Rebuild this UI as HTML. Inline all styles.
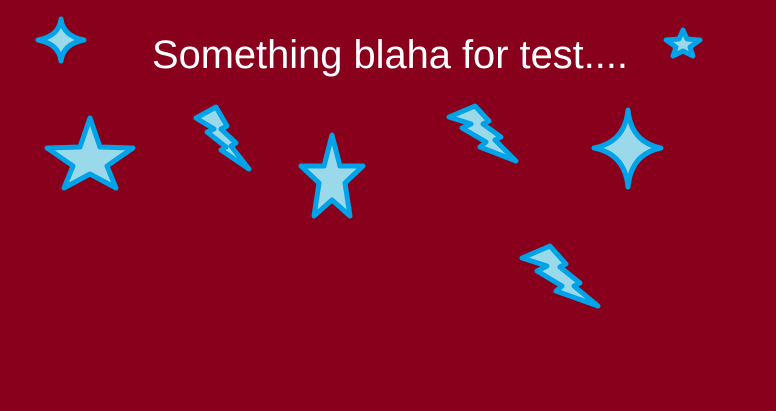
<!DOCTYPE html>
<html><head><meta charset="utf-8"><style>
html,body{margin:0;padding:0;background:#88001b;}
svg{display:block}
</style></head><body>
<svg width="776" height="411" viewBox="0 0 776 411" xmlns="http://www.w3.org/2000/svg">
<rect width="776" height="411" fill="#88001b"/>
<g fill="#99d9ea" stroke="#00a2e8" stroke-width="5" stroke-linejoin="round">
<!-- sparkle 1 -->
<path d="M61 19 Q63 36 84 40 Q63 44 61 61 Q59 44 38 40 Q59 36 61 19 Z"/>
<!-- sparkle 2 -->
<path d="M628 110 Q631 142 661 148 Q631 154 628 187 Q625 154 594 148 Q625 142 628 110 Z"/>
<!-- big star -->
<path d="M90 118 L100 147 L133 148 L107 166 L116 188 L90 174 L64 188 L73 166 L47 148 L80 147 Z"/>
<!-- mid star -->
<path d="M332 135 L340 166 L363 166 L345 183 L350 216 L332 200 L314 216 L319 183 L301 166 L324 166 Z"/>
<!-- small star -->
<path d="M683 30 L687 39 L700 40 L690 47 L693 56 L683 51 L673 56 L676 47 L666 40 L679 39 Z"/>
<!-- lightning 2 -->
<path d="M449 117 L475 106 L489 121 L483 124 L501 137 L495 140 L516 161 L480 147 L486 142 L462 128 L471 124 Z"/>
<!-- lightning 1 -->
<path d="M196 118 L216 107 L227 126 L221 129 L236 143 L231 146 L249 169 L221 150 L226 147 L207 132 L214 129 Z"/>
<!-- lightning 3 -->
<path d="M522 258 L550 246 L566 264 L560 267 L580 283 L574 286 L598 306 L556 291 L562 286 L537 271 L547 266 Z"/>
</g>
<text x="152" y="68" font-family="'Liberation Sans', sans-serif" font-size="40" fill="#ffffff" textLength="476" lengthAdjust="spacingAndGlyphs">Something blaha for test....</text>
</svg>
</body></html>
